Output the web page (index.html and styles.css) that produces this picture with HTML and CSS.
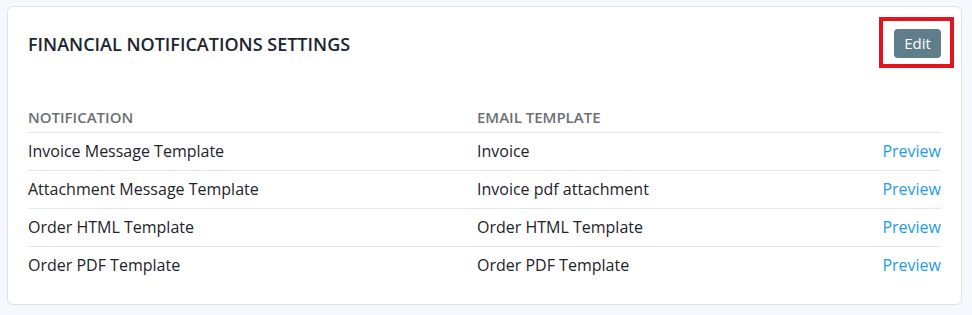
FILE: index.html
```html
<!DOCTYPE html>
<html>
<head>
<meta charset="utf-8">
<link rel="stylesheet" href="styles.css">
</head>
<body>
<div class="card">
  <div class="card-header">
    <h2 class="title">FINANCIAL NOTIFICATIONS SETTINGS</h2>
    <div class="btn-wrap">
      <button class="btn-edit">Edit</button>
      <span class="highlight"></span>
    </div>
  </div>
  <div class="table">
    <div class="row head">
      <div class="cell">NOTIFICATION</div>
      <div class="cell">EMAIL TEMPLATE</div>
      <div class="cell"></div>
    </div>
    <div class="row">
      <div class="cell">Invoice Message Template</div>
      <div class="cell">Invoice</div>
      <div class="cell action"><a class="link">Preview</a></div>
    </div>
    <div class="row">
      <div class="cell">Attachment Message Template</div>
      <div class="cell">Invoice pdf attachment</div>
      <div class="cell action"><a class="link">Preview</a></div>
    </div>
    <div class="row">
      <div class="cell">Order HTML Template</div>
      <div class="cell">Order HTML Template</div>
      <div class="cell action"><a class="link">Preview</a></div>
    </div>
    <div class="row">
      <div class="cell">Order PDF Template</div>
      <div class="cell">Order PDF Template</div>
      <div class="cell action"><a class="link">Preview</a></div>
    </div>
  </div>
</div>
</body>
</html>
```
FILE: styles.css
```css
html, body {
  margin: 0;
  padding: 0;
  background: #f5f9fd;
}
body {
  padding: 6px 10px 0 7px;
  font-family: "Open Sans", "Noto Sans", sans-serif;
  color: #1d2329;
}
.card {
  background: #ffffff;
  border: 1px solid #dbe3ec;
  border-radius: 6px;
  padding: 22px 20px 20px 20px;
}
.card-header {
  display: flex;
  align-items: center;
  justify-content: space-between;
  height: 29px;
}
.title {
  margin: 0;
  font-size: 18px;
  line-height: 24px;
  font-weight: 600;
  color: #1b2530;
  letter-spacing: 0;
}
.btn-wrap {
  position: relative;
  display: flex;
}
.btn-edit {
  width: 47px;
  height: 29px;
  border: none;
  border-radius: 4px;
  background: #607d8b;
  color: #ffffff;
  font-family: "Open Sans", "Noto Sans", sans-serif;
  font-size: 15px;
  padding: 0;
  line-height: 29px;
}
.highlight {
  position: absolute;
  left: -15px;
  top: -12px;
  right: -13px;
  bottom: -10px;
  border: 4px solid #e3141b;
  box-sizing: border-box;
}
.table {
  margin-top: 48px;
}
.row {
  display: grid;
  grid-template-columns: 449px 1fr auto;
  height: 37px;
  align-items: center;
  border-top: 1px solid #e3e6ea;
  font-size: 16px;
}
.row .cell {
  padding-bottom: 2px;
}
.row.head {
  border-top: none;
  height: 26px;
  align-items: end;
  font-size: 15px;
  font-weight: 600;
  color: #6c7074;
}
.row.head .cell {
  line-height: 22px;
  padding-bottom: 5px;
}
.cell {
  line-height: 22px;
}
.action {
  text-align: right;
}
.link {
  color: #1e9be6;
  text-decoration: none;
}
```
